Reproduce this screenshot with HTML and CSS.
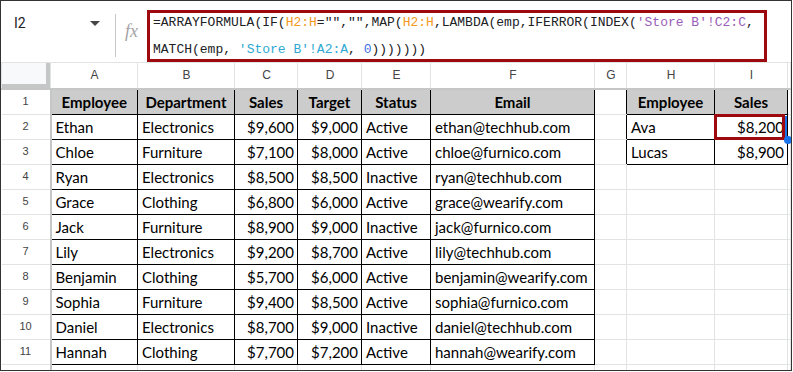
FILE: index.html
```html
<!DOCTYPE html>
<html lang="en">
<head>
    <meta charset="UTF-8">
    <title>Store sales lookup</title>
    <link rel="stylesheet" href="styles.css">
</head>
<body>
    <div class="sheet">
        <div class="formula-bar">
            <div class="name-box">
                <span>I2</span>
                <span class="caret"></span>
            </div>
            <div class="sep"></div>
            <div class="fx">fx</div>
            <div class="formula">
                <div class="formula-text">=ARRAYFORMULA(IF(<span class="ref-h">H2:H</span>="","",MAP(<span class="ref-h">H2:H</span>,LAMBDA(emp,IFERROR(INDEX(<span class="ref-c">'Store B'!C2:C</span>,
MATCH(emp, <span class="ref-a">'Store B'!A2:A</span>, <span class="num">0</span>)))))))</div>
            </div>
        </div>

        <table class="grid">
            <colgroup>
                <col class="c-row">
                <col class="c-a">
                <col class="c-b">
                <col class="c-c">
                <col class="c-d">
                <col class="c-e">
                <col class="c-f">
                <col class="c-g">
                <col class="c-h">
                <col class="c-i">
                <col class="c-j">
            </colgroup>
            <tr class="col-head">
                <td class="corner"></td>
                <td>A</td><td>B</td><td>C</td><td>D</td><td>E</td><td>F</td><td>G</td><td>H</td><td>I</td><td></td>
            </tr>
            <tr class="first">
                <td class="rn">1</td>
                <td class="d h">Employee</td><td class="d h">Department</td><td class="d h">Sales</td><td class="d h">Target</td><td class="d h">Status</td><td class="d h">Email</td>
                <td class="gr"></td>
                <td class="d h">Employee</td><td class="d h">Sales</td><td></td>
            </tr>
            <tr>
                <td class="rn">2</td>
                <td class="d">Ethan</td><td class="d">Electronics</td><td class="d r">$9,600</td><td class="d r">$9,000</td><td class="d">Active</td><td class="d">ethan@techhub.com</td>
                <td class="gr"></td>
                <td class="d">Ava</td>
                <td class="d r selected">$8,200<span class="sel"></span><span class="sel-edge"></span><span class="handle"></span></td>
                <td></td>
            </tr>
            <tr>
                <td class="rn">3</td>
                <td class="d">Chloe</td><td class="d">Furniture</td><td class="d r">$7,100</td><td class="d r">$8,000</td><td class="d">Active</td><td class="d">chloe@furnico.com</td>
                <td class="gr"></td>
                <td class="d">Lucas</td><td class="d r">$8,900</td><td></td>
            </tr>
            <tr>
                <td class="rn">4</td>
                <td class="d">Ryan</td><td class="d">Electronics</td><td class="d r">$8,500</td><td class="d r">$8,500</td><td class="d">Inactive</td><td class="d">ryan@techhub.com</td>
                <td></td><td></td><td></td><td></td>
            </tr>
            <tr>
                <td class="rn">5</td>
                <td class="d">Grace</td><td class="d">Clothing</td><td class="d r">$6,800</td><td class="d r">$6,000</td><td class="d">Active</td><td class="d">grace@wearify.com</td>
                <td></td><td></td><td></td><td></td>
            </tr>
            <tr>
                <td class="rn">6</td>
                <td class="d">Jack</td><td class="d">Furniture</td><td class="d r">$8,900</td><td class="d r">$9,000</td><td class="d">Inactive</td><td class="d">jack@furnico.com</td>
                <td></td><td></td><td></td><td></td>
            </tr>
            <tr>
                <td class="rn">7</td>
                <td class="d">Lily</td><td class="d">Electronics</td><td class="d r">$9,200</td><td class="d r">$8,700</td><td class="d">Active</td><td class="d">lily@techhub.com</td>
                <td></td><td></td><td></td><td></td>
            </tr>
            <tr>
                <td class="rn">8</td>
                <td class="d">Benjamin</td><td class="d">Clothing</td><td class="d r">$5,700</td><td class="d r">$6,000</td><td class="d">Active</td><td class="d">benjamin@wearify.com</td>
                <td></td><td></td><td></td><td></td>
            </tr>
            <tr>
                <td class="rn">9</td>
                <td class="d">Sophia</td><td class="d">Furniture</td><td class="d r">$9,400</td><td class="d r">$8,500</td><td class="d">Active</td><td class="d">sophia@furnico.com</td>
                <td></td><td></td><td></td><td></td>
            </tr>
            <tr>
                <td class="rn">10</td>
                <td class="d">Daniel</td><td class="d">Electronics</td><td class="d r">$8,700</td><td class="d r">$9,000</td><td class="d">Inactive</td><td class="d">daniel@techhub.com</td>
                <td></td><td></td><td></td><td></td>
            </tr>
            <tr>
                <td class="rn">11</td>
                <td class="d">Hannah</td><td class="d">Clothing</td><td class="d r">$7,700</td><td class="d r">$7,200</td><td class="d">Active</td><td class="d">hannah@wearify.com</td>
                <td></td><td></td><td></td><td></td>
            </tr>
            <tr>
                <td class="rn">12</td>
                <td></td><td></td><td></td><td></td><td></td><td></td><td></td><td></td><td></td><td></td>
            </tr>
        </table>
    </div>
</body>
</html>
```

FILE: styles.css
```css
body {
    margin: 0;
    background: white;
}

.sheet {
    width: 792px;
    height: 371px;
    box-sizing: border-box;
    border: 1px solid #333;
    overflow: hidden;
    background: white;
    font-family: 'Lato', sans-serif;
}

/* Formula bar */
.formula-bar {
    display: flex;
    align-items: flex-start;
    height: 61px;
}

.name-box {
    width: 101px;
    height: 24px;
    margin-top: 10px;
    padding-left: 13px;
    padding-right: 2px;
    box-sizing: border-box;
    display: flex;
    align-items: center;
    justify-content: space-between;
    font-family: 'Roboto', sans-serif;
    font-size: 14px;
    color: #202124;
}

.caret {
    width: 0;
    height: 0;
    border-left: 5px solid transparent;
    border-right: 5px solid transparent;
    border-top: 5px solid #444746;
}

.sep {
    width: 1px;
    height: 43px;
    margin-top: 13px;
    margin-left: 13px;
    background: #c7c7c7;
}

.fx {
    width: 31px;
    height: 61px;
    display: flex;
    align-items: center;
    justify-content: center;
    font-family: 'Liberation Serif', serif;
    font-style: italic;
    font-size: 18px;
    color: #a3a3a3;
}

.formula {
    width: 620px;
    height: 52px;
    margin-top: 9px;
    box-sizing: border-box;
    border: 3px solid #9c0a10;
    padding: 0 3px;
    overflow: hidden;
}

.formula-text {
    margin-top: -4px;
    white-space: pre;
    font-family: 'Liberation Mono', monospace;
    font-size: 13px;
    line-height: 27px;
    color: #202124;
}

.ref-h { color: #f39a1f; }
.ref-c { color: #9a5db8; }
.ref-a { color: #2ea8d3; }
.num { color: #3c6ee0; }

/* Grid */
.grid {
    border-collapse: collapse;
    table-layout: fixed;
    width: 789px;
}

.c-row { width: 49px; }
.c-a { width: 87px; }
.c-b { width: 97px; }
.c-c { width: 63px; }
.c-d { width: 64px; }
.c-e { width: 69px; }
.c-f { width: 164px; }
.c-g { width: 32px; }
.c-h { width: 88px; }
.c-i { width: 73px; }
.c-j { width: 3px; }

.grid tr {
    height: 25px;
}

.grid tr.col-head,
.grid tr.first {
    height: 26px;
}

.grid td {
    padding: 0 3px 0 4px;
    border: 1px solid #e2e3e3;
    font-size: 15px;
    line-height: 18px;
    color: #000;
    white-space: nowrap;
    overflow: hidden;
}

.col-head td {
    text-align: center;
    font-family: 'Liberation Sans', sans-serif;
    font-size: 12px;
    color: #444;
    border-bottom: 2px solid #c4c7c5;
}

.corner {
    background: #f8f9fa;
    box-shadow: inset -4px -4px 0 #c4c7c5;
}

.grid td.rn {
    text-align: center;
    font-family: 'Liberation Sans', sans-serif;
    font-size: 11px;
    color: #444;
    border-right: 2px solid #c4c7c5;
    border-left: none;
    padding: 0 0 2px 0;
}

.grid td.d {
    border: 1px solid #000;
}

.grid td.h {
    background: #cccccc;
    font-weight: bold;
    text-align: center;
    padding: 0 2px;
}

.grid td.r {
    text-align: right;
}

.grid td.gr {
    border-right-color: #000;
}

.selected {
    position: relative;
    overflow: visible !important;
}

.sel {
    position: absolute;
    left: -1px;
    top: -1px;
    right: 2px;
    bottom: -1px;
    border: 3px solid #9c0a10;
}

.sel-edge {
    position: absolute;
    right: 0;
    top: 1px;
    bottom: -1px;
    width: 2px;
    background: #1a73e8;
}

.handle {
    position: absolute;
    right: -5px;
    bottom: -5px;
    width: 8px;
    height: 8px;
    border-radius: 50%;
    background: #1a73e8;
}
```
